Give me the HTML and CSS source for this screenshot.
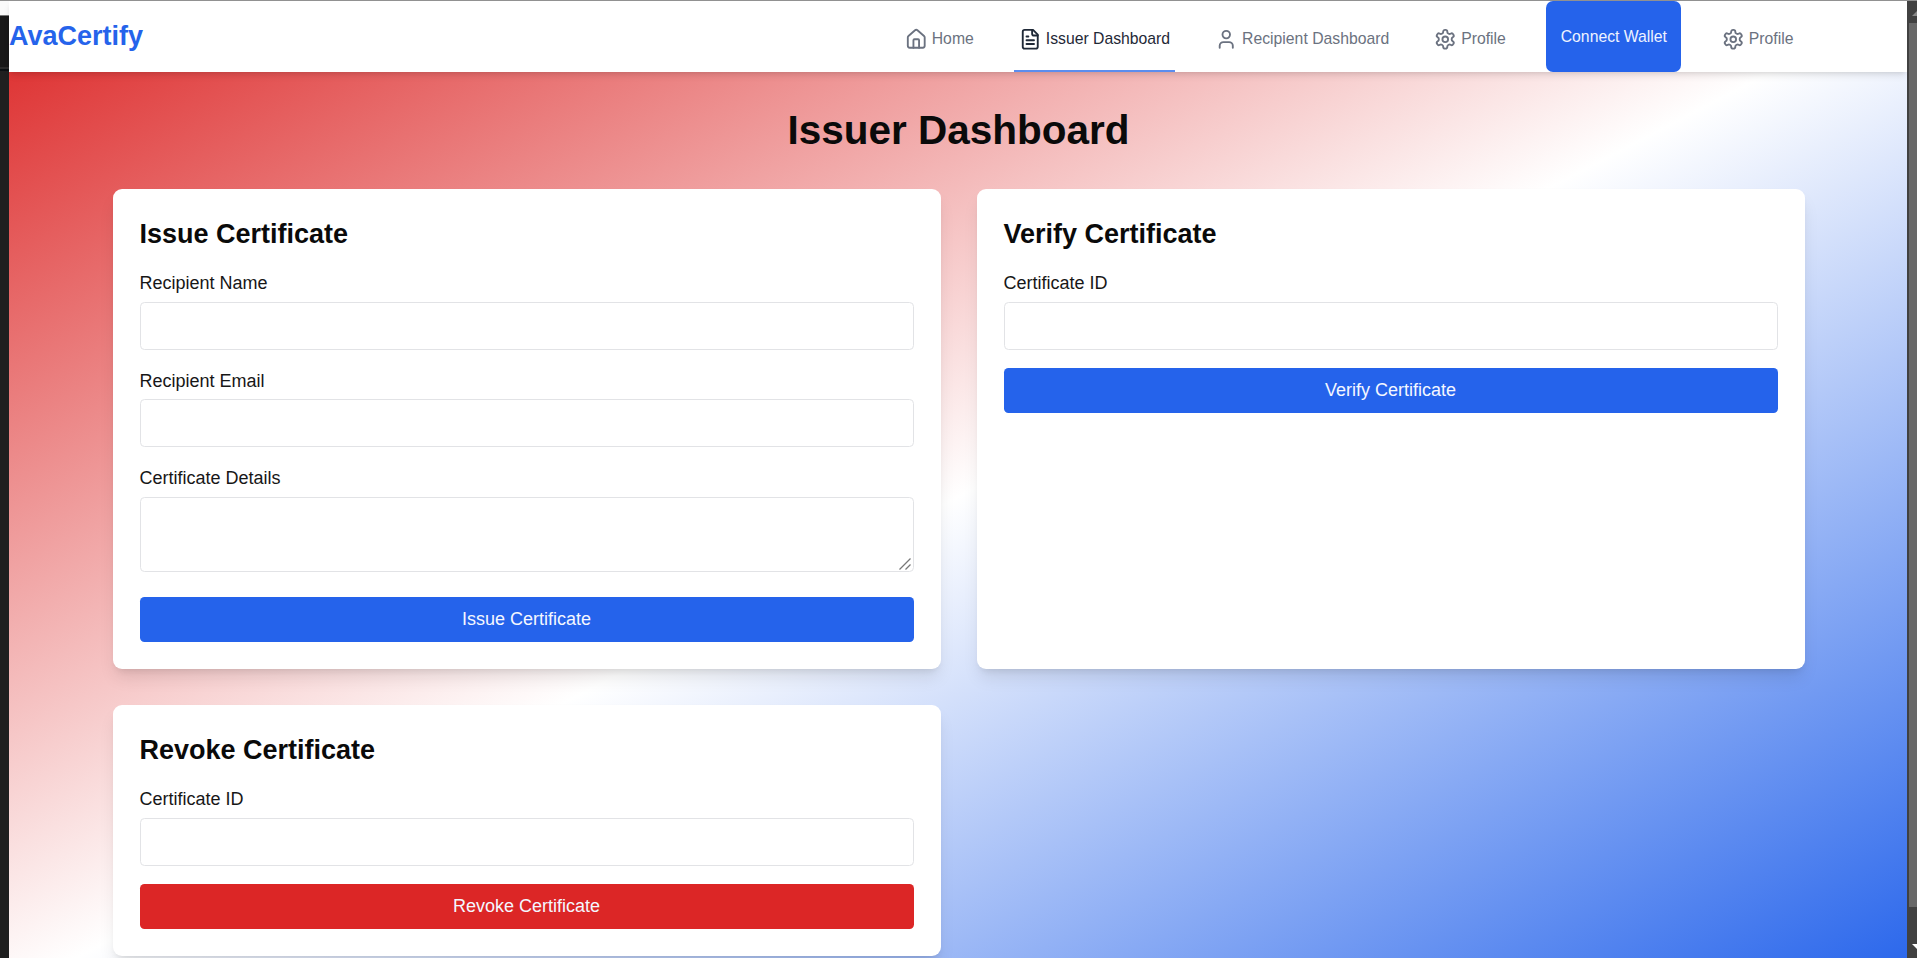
FILE: index.html
```html
<!DOCTYPE html>
<html lang="en">
<head>
<meta charset="utf-8">
<title>AvaCertify - Issuer Dashboard</title>
<link rel="stylesheet" href="styles.css">
</head>
<body>
<svg class="sprite" aria-hidden="true">
  <symbol id="home" viewBox="0 0 24 24"><path d="M15 21v-8a1 1 0 0 0-1-1h-4a1 1 0 0 0-1 1v8"/><path d="M3 10a2 2 0 0 1 .709-1.528l7-5.999a2 2 0 0 1 2.582 0l7 5.999A2 2 0 0 1 21 10v9a2 2 0 0 1-2 2H5a2 2 0 0 1-2-2z"/></symbol>
  <symbol id="file" viewBox="0 0 24 24"><path d="M15 2H6a2 2 0 0 0-2 2v16a2 2 0 0 0 2 2h12a2 2 0 0 0 2-2V7Z"/><path d="M14 2v4a2 2 0 0 0 2 2h4M10 9H8M16 13H8M16 17H8"/></symbol>
  <symbol id="user" viewBox="0 0 24 24"><path d="M19 21v-2a4 4 0 0 0-4-4H9a4 4 0 0 0-4 4v2"/><circle cx="12" cy="7" r="4"/></symbol>
  <symbol id="gear" viewBox="0 0 24 24"><path d="M12.22 2h-.44a2 2 0 0 0-2 2v.18a2 2 0 0 1-1 1.730l-.43.25a2 2 0 0 1-2 0l-.15-.08a2 2 0 0 0-2.730.730l-.22.380a2 2 0 0 0 .730 2.730l.15.100a2 2 0 0 1 1 1.720v.510a2 2 0 0 1-1 1.740l-.15.090a2 2 0 0 0-.730 2.730l.22.380a2 2 0 0 0 2.730.730l.15-.08a2 2 0 0 1 2 0l.43.250a2 2 0 0 1 1 1.730V20a2 2 0 0 0 2 2h.44a2 2 0 0 0 2-2v-.18a2 2 0 0 1 1-1.730l.43-.25a2 2 0 0 1 2 0l.15.080a2 2 0 0 0 2.730-.730l.22-.390a2 2 0 0 0-.730-2.730l-.15-.08a2 2 0 0 1-1-1.740v-.5a2 2 0 0 1 1-1.740l.15-.09a2 2 0 0 0 .730-2.730l-.22-.380a2 2 0 0 0-2.730-.730l-.15.080a2 2 0 0 1-2 0l-.43-.25a2 2 0 0 1-1-1.730V4a2 2 0 0 0-2-2z"/><circle cx="12" cy="12" r="3"/></symbol>
</svg>
<div class="window">
  <div class="edge-left"></div>
  <div class="page">
    <header class="header">
      <a class="brand">AvaCertify</a>
      <nav class="nav">
        <a class="link"><svg class="icon"><use href="#home"/></svg>Home</a>
        <a class="link active"><svg class="icon"><use href="#file"/></svg>Issuer Dashboard</a>
        <a class="link"><svg class="icon"><use href="#user"/></svg>Recipient Dashboard</a>
        <a class="link"><svg class="icon"><use href="#gear"/></svg>Profile</a>
        <button class="wallet">Connect Wallet</button>
        <a class="link"><svg class="icon"><use href="#gear"/></svg>Profile</a>
      </nav>
    </header>
    <main class="main">
      <h1 class="title">Issuer Dashboard</h1>
      <div class="grid">
        <section class="card">
          <h2 class="heading">Issue Certificate</h2>
          <label class="label">Recipient Name</label><input class="field">
          <label class="label spaced">Recipient Email</label><input class="field">
          <label class="label spaced">Certificate Details</label>
          <div class="area-wrap"><textarea class="field area"></textarea><svg class="grip" viewBox="0 0 12 12"><path d="M.5 11.500l11-11M6.500 11.500l5-5"/></svg></div>
          <button class="button after-area">Issue Certificate</button>
        </section>
        <section class="card">
          <h2 class="heading">Verify Certificate</h2>
          <label class="label">Certificate ID</label><input class="field">
          <button class="button">Verify Certificate</button>
        </section>
        <section class="card">
          <h2 class="heading">Revoke Certificate</h2>
          <label class="label">Certificate ID</label><input class="field">
          <button class="button danger">Revoke Certificate</button>
        </section>
      </div>
    </main>
  </div>
  <div class="scrollbar"><i class="arrow up"></i><div class="thumb"></div><i class="arrow down"></i></div>
</div>
</body>
</html>
```
FILE: styles.css
```css
* { box-sizing: border-box; }
body { margin: 0; overflow: hidden; font-family: "Liberation Sans", Arial, sans-serif; color: #0a0a0a; }
.sprite { display: none; }
.window { display: flex; height: 958px; overflow: hidden; border-top: 1px solid #919191; background: #fff; }
.edge-left { width: 9px; flex: none; background: linear-gradient(#fafafa 14px, #777 14px 15px, #181818 15px 66px, #2b2b2b 66px 68px, #0b0f12 68px 70px, #1f1f1f 70px); }
.page { flex: 1; height: 992px; background: linear-gradient(to bottom right, #dc2626, #fff, #2563eb); }
.header { position: relative; height: 71px; display: flex; justify-content: space-between; background: #fff; box-shadow: 0 4.500px 7px -1px rgb(0 0 0 / .1), 0 2px 4.500px -2px rgb(0 0 0 / .1); }
.brand { font-size: 27px; font-weight: 700; line-height: 71px; color: #2563eb; }
.nav { display: flex; gap: 36px; padding-right: 109px; }
.link { display: flex; align-items: center; gap: 4.500px; padding: 7px 4.500px 0; font-size: 15.750px; color: #6b7280; border-bottom: 2px solid transparent; }
.link.active { color: #1f2937; border-color: #5b8def; }
.icon { width: 22.500px; height: 22.500px; fill: none; stroke: currentColor; stroke-width: 2; stroke-linecap: round; stroke-linejoin: round; }
.wallet { width: 135px; padding: 1px 0 0; border: 0; border-radius: 7px; background: #2563eb; color: #eef2ff; font: 15.750px "Liberation Sans", Arial, sans-serif; }
.main { padding: 36px 102.500px 36px 103.500px; }
.title { margin: 0 0 36px; font-size: 40.500px; line-height: 45px; text-align: center; }
.grid { display: grid; grid-template-columns: 1fr 1fr; gap: 36px; }
.card { padding: 27px; border-radius: 9px; background: #fff; box-shadow: 0 11px 17px -3px rgb(0 0 0 / .1), 0 4.500px 7px -4px rgb(0 0 0 / .1); }
.heading { margin: 0 0 18px; font-size: 27px; line-height: 36px; }
.label { display: block; margin-bottom: 4.500px; font-size: 18px; line-height: 27px; color: #171717; }
.spaced { margin-top: 18px; }
.field { display: block; width: 100%; height: 48px; border: 1px solid #e2e3e6; border-radius: 4.500px; background: #fff; outline: 0; }
.area-wrap { position: relative; }
.area { height: 75px; resize: none; }
.grip { position: absolute; right: 3px; bottom: 2px; width: 12px; height: 12px; fill: none; stroke: #777; stroke-width: 1.300; }
.button { display: block; width: 100%; height: 45px; margin-top: 18px; padding: 0; border: 0; border-radius: 4.500px; background: #2563eb; color: #f4f7ff; font: 18px "Liberation Sans", Arial, sans-serif; }
.after-area { margin-top: 25.500px; }
.danger { background: #dc2626; }
.scrollbar { position: relative; width: 10px; flex: none; overflow: hidden; padding: 22px 0 0 2px; background: #414141; }
.thumb { width: 12px; height: 884px; background: #686868; }
.arrow { position: absolute; left: 5px; border: 6px solid transparent; border-top: 0; }
.up { top: 9px; border-bottom: 6px solid #888; }
.down { top: 943px; border-bottom: 0; border-top: 6px solid #fff; }
```
